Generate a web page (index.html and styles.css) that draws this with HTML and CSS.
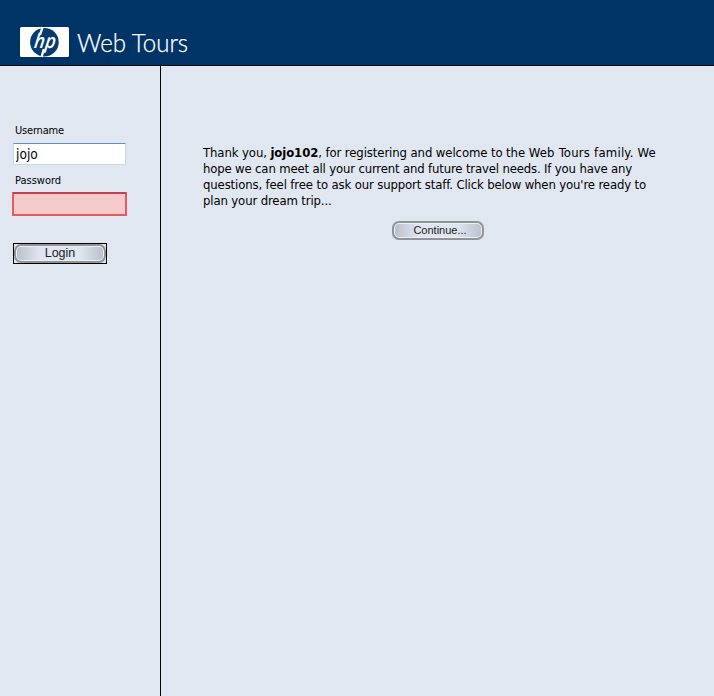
FILE: index.html
```html
<!DOCTYPE html>
<html lang="en">
<head>
<meta charset="utf-8">
<title>Web Tours</title>
<link rel="stylesheet" href="styles.css">
</head>
<body>
<header class="header">
  <svg class="logo" width="180" height="36" viewBox="0 0 180 36" role="img" aria-label="hp Web Tours">
    <rect width="49" height="30" rx="1.5" fill="#fff"/>
    <circle cx="24.4" cy="15.2" r="14.3" fill="#073b70"/>
    <path d="M22.6 0 L20 8 M21.6 30 L23.8 22" stroke="#fff" stroke-width="2.4"/>
    <text class="mark" transform="translate(13.6 21) skewX(-7)" textLength="21.5" lengthAdjust="spacingAndGlyphs">hp</text>
    <text class="brand" x="57" y="25" textLength="111" lengthAdjust="spacingAndGlyphs">Web Tours</text>
  </svg>
</header>
<div class="body">
  <form class="sidebar">
    <label class="label" for="user"><span>Username</span></label>
    <input class="field" id="user" type="text" value="jojo">
    <label class="label label-password" for="pass">Password</label>
    <input class="field field-error" id="pass" type="password">
    <button class="login" type="button"><span class="pill pill-login">Login</span></button>
  </form>
  <main class="main">
    <p class="message">
      <span class="line l1">Thank you, <b>jojo102</b>, for registering and welcome to the <span class="wide">Web Tours family. We</span></span>
      <span class="line l2">hope we can meet all your current and future travel needs. If you have any</span>
      <span class="line l3">questions, feel free to ask our support staff. Click below when you're ready to</span>
      <span class="line l4">plan your dream trip...</span>
    </p>
    <button class="pill pill-continue" type="button">Continue...</button>
  </main>
</div>
</body>
</html>
```
FILE: styles.css
```css
* { box-sizing: border-box; }
body {
  margin: 0;
  height: 696px;
  display: flex;
  flex-direction: column;
  background: #e0e7f1;
  color: #000;
  font-family: Tahoma, "DejaVu Sans Condensed", "DejaVu Sans", sans-serif;
  overflow: hidden;
}
.header {
  height: 66px;
  padding: 27px 0 0 20px;
  background: #003366;
  border-bottom: 1px solid #000;
}
.logo { display: block; overflow: visible; }
.mark { font: italic 600 20px "Open Sans", sans-serif; fill: #fff; }
.brand { font: 300 25px Lato, sans-serif; fill: #fff; stroke: #fff; stroke-width: .25px; }
.body { flex: 1; display: flex; }
.sidebar {
  width: 161px;
  padding: 58px 0 0 13px;
  border-right: 1px solid #000;
  display: flex;
  flex-direction: column;
  align-items: flex-start;
}
.label { height: 14px; margin-left: 2px; font-size: 11px; line-height: 14px; letter-spacing: -.2px; }
.field {
  width: 113px;
  height: 22px;
  margin: 5px 0 0;
  padding: 1px 2px;
  background: #fff;
  border: 1px solid #c5daed;
  border-top-color: #5794bf;
  border-radius: 1px;
  font: 13.6px Tahoma, "DejaVu Sans Condensed", sans-serif;
  outline: none;
}
.label-password { margin-top: 9px; letter-spacing: 0; }
.field-error {
  width: 115px;
  height: 24px;
  margin: 4px 0 0 -1px;
  background: #f4caca;
  border: 2px solid #e85a60;
  border-top-color: #ca3d50;
}
.login { margin: 27px 0 0; padding: 0; width: 94px; height: 21px; background: #e0e7f1; border: 1px solid #000; }
.pill {
  display: block;
  padding: 0;
  border: 2px solid #909499;
  border-radius: 7px;
  background: linear-gradient(90deg, #b9c0cc, #dfe6f0 28%, #dfe6f0 72%, #b9c0cc);
  box-shadow: inset 0 0 0 1px #edf1f7;
  font-family: Arial, "Liberation Sans", sans-serif;
  color: #1c1c22;
  text-align: center;
}
.pill-login { width: 92px; height: 19px; font-size: 12.5px; line-height: 14px; }
.main { flex: 1; padding: 79px 0 0 42px; }
.message { margin: 0; font-size: 13px; line-height: 16px; }
.line { display: block; width: max-content; white-space: nowrap; }
.l1 { letter-spacing: -.1px; }
.l2 { letter-spacing: -.16px; }
.l3 { letter-spacing: -.135px; }
.l4 { letter-spacing: -.13px; }
.wide { letter-spacing: .22px; }
.pill-continue { width: 92px; height: 19px; margin: 12px 0 0 189px; padding-left: 4px; font-size: 11px; line-height: 15px; }
```
